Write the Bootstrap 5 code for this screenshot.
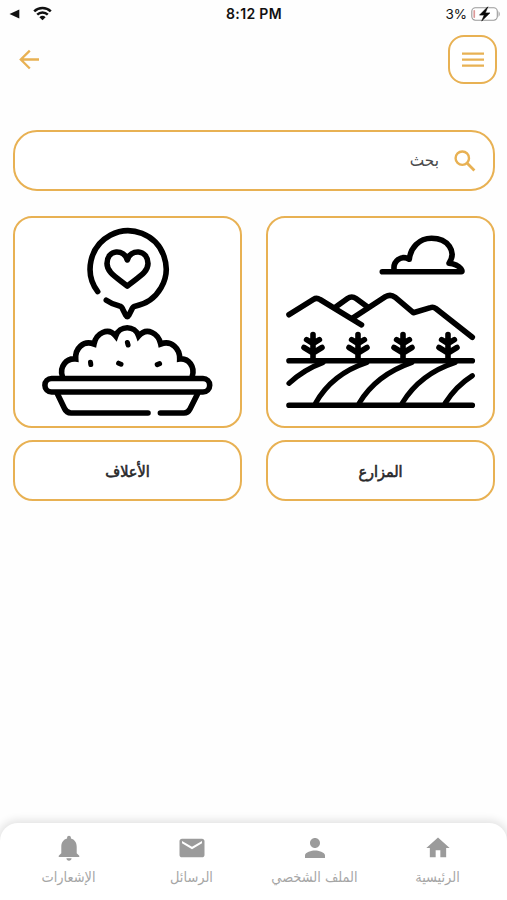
<!DOCTYPE html>
<html lang="ar" dir="ltr">
<head>
<meta charset="utf-8">
<meta name="viewport" content="width=device-width, initial-scale=1">
<title>المزارع والأعلاف</title>
<link href="https://cdn.jsdelivr.net/npm/bootstrap@5.3.0/dist/css/bootstrap.min.css" rel="stylesheet">
<style>
:root{--gold:#e8b153}
body{height:900px;overflow:hidden;background:#fefefe;font-family:"DejaVu Sans Condensed","DejaVu Sans",sans-serif;color:#29292b}
svg{display:block;flex:none}
.statusbar{height:28px;font-family:Inter,"Liberation Sans",sans-serif;font-size:13.5px;line-height:26px;color:#111;padding:0 6px 1px 9px}
.statusbar .clock{font-weight:600;font-size:14px;letter-spacing:.35px;margin-right:2px}
.side{width:120px}
.wifi{margin-left:12px}
.topbar{height:63px;padding:7px 10px 0 19px}
.back{margin-top:14px}
.gold-box{border:2.4px solid var(--gold);background:#fff}
.menu-btn{width:49px;height:49px;border-radius:16px}
.content{padding:39px 12px 0 13px}
.search{height:61px;border-radius:24px;padding-right:17px;gap:15px}
.search span{font-size:17px;color:#4b4b4d}
.tiles{display:grid;grid-template-columns:229px 229px;column-gap:24px;row-gap:12px;margin-top:25px}
.pic{height:212px;border-radius:19px;overflow:hidden}
.name{height:61px;border-radius:20px;font-size:16px;-webkit-text-stroke:.6px #29292b}
.name span{padding-top:2px}
.tabs{height:77px;border-radius:18px 18px 0 0;background:#fff;box-shadow:0 0 8px 3px rgba(0,0,0,.11);padding:11px 8px 0 7px;font-size:14.4px}
.tabs a{color:#9b9b9b;width:123px}
.tabs a span{line-height:20px;margin-top:5px;white-space:nowrap;color:#a6a6a6}
.person{margin:-1px 0}
</style>
<script src="https://cdn.jsdelivr.net/npm/bootstrap@5.3.0/dist/js/bootstrap.bundle.min.js"></script>
</head>
<body class="d-flex flex-column">
<header>
  <div class="statusbar d-flex justify-content-between align-items-center">
    <div class="side d-flex align-items-center">
      <svg width="12" height="10" viewBox="0 0 12 10"><path d="M.5 5 10.300.600v8.800z" fill="#111"/></svg>
      <svg class="wifi" width="19" height="15" viewBox="0 0 19 15" fill="none" stroke="#111" stroke-width="2.500"><path d="M1.200 5.300a12 12 0 0 1 16.600 0M4.200 8.700a7.600 7.600 0 0 1 10.600 0"/><path d="M9.500 14.200 6.400 11.200a4.500 4.500 0 0 1 6.200 0z" fill="#111" stroke="none"/></svg>
    </div>
    <div class="clock">8:12 PM</div>
    <div class="side d-flex align-items-center justify-content-end">
      <span>3%</span>
      <svg class="ms-1" width="30" height="16" viewBox="0 0 30 16"><rect x=".8" y="1.800" width="25.500" height="12.400" rx="3.600" fill="#fff" stroke="#999" stroke-width="1.100"/><path d="M27.500 5q2.800 3 0 6z" fill="#aaa"/><rect x="2.400" y="4" width="1.700" height="8" rx=".8" fill="#d99"/><path d="M16.800.800 8.500 9.100h4.700L10.700 15l8.200-8.100h-4.600z" fill="#080808" stroke="#080808" stroke-width=".6"/></svg>
    </div>
  </div>
  <div class="topbar d-flex justify-content-between">
    <svg class="back" width="22" height="22" viewBox="0 0 22 22" fill="none" stroke="#e8b153" stroke-width="2.300"><path d="M20 10.500H2.200M10.800 1.600 1.800 10.500l9 9"/></svg>
    <button class="btn p-0 gold-box menu-btn d-flex align-items-center justify-content-center" aria-label="القائمة">
      <svg width="22" height="16" viewBox="0 0 22 16"><path d="M0 1.600h22M0 7.600h22M0 13.600h22" stroke="#e8b153" stroke-width="2.400"/></svg>
    </button>
  </div>
</header>
<main class="content flex-grow-1">
  <div class="search gold-box d-flex align-items-center justify-content-end">
    <span dir="rtl">بحث</span>
    <svg width="22" height="22" viewBox="0 0 22 22" fill="none" stroke="#e8b153" stroke-width="2.400"><circle cx="8.300" cy="8.200" r="6.700"/><path d="m13.200 13.200 7.200 7.200" stroke-width="2.800"/></svg>
  </div>
  <div class="tiles">
    <div class="pic gold-box">
      <svg width="100%" height="100%" viewBox="15 218 225 208" fill="none" stroke="#000" stroke-width="5.600" stroke-linecap="round" stroke-linejoin="round">
        <path d="M97.700 291.600A38 38 0 1 1 135 306.200Q133 306.600 132 309L128.700 315.500Q127.300 318 125.900 315.500L122.600 309Q121.500 306.300 119.500 306Q112.500 304.500 106.300 300.200"/>
        <path d="M127.300 260C124.500 249 107.300 248.500 107 263.500C107 272 115 276.300 127.300 286C139.600 276.300 148 272 148 263.500C147.500 248.500 130.100 249 127.300 260Z"/>
        <path stroke-linejoin="miter" d="M62.300 376C59.500 367 66 358 75.700 359C75 348.500 83 340 94 344C96 333.500 108 326.500 115.700 336C119.500 325 135 325 138.700 336C147 326.500 158.500 333.500 160.700 344C171.500 340 180 348.500 179.700 359C189 358 195 367 192.300 376"/>
        <rect x="44.900" y="378.500" width="164.800" height="13.500" rx="6.700"/>
        <path d="M57.500 394 64.500 408.500Q66.500 413 71 413H148M160.400 413H184Q188 413 190 409L197.500 394"/>
        <path stroke-width="5" d="m90.500 362.200.3 2.400M118.600 363.200l2.400 1M127.400 342.500l.7 2.500M157.200 364.600l2.400-1"/>
      </svg>
    </div>
    <div class="pic gold-box">
      <svg width="100%" height="100%" viewBox="268 218 225 208" fill="none" stroke="#000" stroke-width="5.600" stroke-linecap="round" stroke-linejoin="round">
        <path d="M382.300 271.700H461Q463 271.500 461 268.800Q457 264.200 449 263.300C457 251.500 448 238.300 431.500 238.300C419 238.300 410.500 248 409.300 259.300C401.500 254.500 392.500 261 394.200 270.500"/>
        <path d="M289 314.700 313.500 299.300Q316.700 297.300 320 299.500L361.500 324.800"/>
        <path d="M336 306.700 347.500 298.500Q351.700 295.500 356 298.500L367.300 306.700"/>
        <path d="M353 317.800 385.500 296.700Q390.500 293.700 395 297.200L413.300 312.700 430.500 307.600Q433.300 306.700 435.800 308.500L472.300 337.300"/>
        <g><path id="sapling" d="M313 334.500V359M306.600 339.700 313 343.500 319.400 339.700M304 347.500 313 353 322 347.500"/><use href="#sapling" x="45"/><use href="#sapling" x="90"/><use href="#sapling" x="135"/></g>
        <path d="M289 360.700H472.300M289 405.300H472.300"/>
        <path stroke-width="5.200" d="M289 383.300Q304 369.500 323 362.500M315.700 403Q332 374 366.700 362.500M359.300 403Q376 375 411.700 362.500M402.300 403Q420 374 455 362.500M445.300 403Q456 386 472.300 375.700"/>
      </svg>
    </div>
    <div class="name gold-box d-flex align-items-center justify-content-center"><span dir="rtl">الأعلاف</span></div>
    <div class="name gold-box d-flex align-items-center justify-content-center"><span dir="rtl">المزارع</span></div>
  </div>
</main>
<nav class="tabs d-flex justify-content-between">
  <a href="#" class="text-decoration-none d-flex flex-column align-items-center">
    <svg width="28" height="28" viewBox="0 0 24 24" fill="currentColor"><path transform="translate(-1.200 -1.200) scale(1.100)" d="M12 22c1.100 0 2-.9 2-2h-4c0 1.100.9 2 2 2zm6-6v-5c0-3.070-1.640-5.640-4.500-6.320V4c0-.83-.67-1.500-1.500-1.500s-1.500.67-1.500 1.500v.68C7.630 5.360 6 7.920 6 11v5l-2 2v1h16v-1l-2-2z"/></svg>
    <span dir="rtl">الإشعارات</span></a>
  <a href="#" class="text-decoration-none d-flex flex-column align-items-center">
    <svg width="30" height="28" viewBox="0 0 24 24" preserveAspectRatio="none" fill="currentColor"><path d="M20 4H4c-1.100 0-2 .9-2 2v12c0 1.100.9 2 2 2h16c1.100 0 2-.9 2-2V6c0-1.100-.9-2-2-2zm0 4-8 5-8-5V6l8 5 8-5v2z"/></svg>
    <span dir="rtl">الرسائل</span></a>
  <a href="#" class="text-decoration-none d-flex flex-column align-items-center">
    <svg class="person" width="30" height="30" viewBox="0 0 24 24" fill="currentColor"><path d="M12 12c2.210 0 4-1.790 4-4s-1.790-4-4-4-4 1.790-4 4 1.790 4 4 4zm0 2c-2.670 0-8 1.340-8 4v2h16v-2c0-2.660-5.330-4-8-4z"/></svg>
    <span dir="rtl">الملف الشخصي</span></a>
  <a href="#" class="text-decoration-none d-flex flex-column align-items-center">
    <svg width="28" height="28" viewBox="0 0 24 24" fill="currentColor"><path d="M10 20v-6h4v6h5v-8h3L12 3 2 12h3v8z"/></svg>
    <span dir="rtl">الرئيسية</span></a>
</nav>
</body>
</html>
